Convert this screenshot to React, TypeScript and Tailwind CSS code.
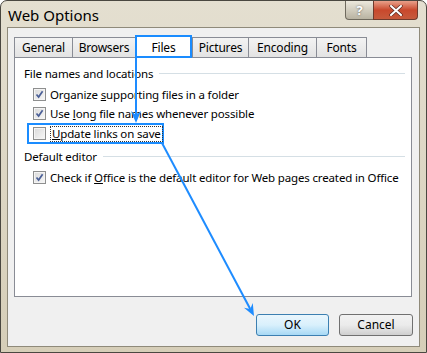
import React from "react";

const font = { fontFamily: '"Noto Sans", "Open Sans", sans-serif' };

type TabProps = { label: string; width: string; selected?: boolean };

function Tab({ label, width, selected }: TabProps) {
  if (selected) {
    return (
      <div
        className={`${width} relative z-10 -mb-px flex h-[23px] items-start justify-center border-2 border-[#1a8cff] bg-white pt-[2px] text-[12px] tracking-[-0.2px] text-black`}
      >
        {label}
      </div>
    );
  }
  return (
    <div
      className={`${width} mt-[2px] flex h-[20px] items-center justify-center border border-r-0 border-b-0 border-[#898c95] bg-gradient-to-b from-[#f3f3f3] to-[#e3e3e3] text-[12px] tracking-[-0.2px] text-black last:border-r`}
    >
      {label}
    </div>
  );
}

function CheckBox({ checked }: { checked?: boolean }) {
  return (
    <div className="flex h-[13px] w-[13px] shrink-0 items-center justify-center border border-[#8e8f8f] bg-white">
      <div className="flex h-[11px] w-[11px] items-center justify-center border border-[#f4f4f4] bg-gradient-to-br from-[#dcdcdc] to-[#f5f5f5]">
        {checked && (
          <svg width="9" height="9" viewBox="0 0 9 9">
            <path d="M1.5 4.5 L3.6 7 L7.6 1.2" fill="none" stroke="#4a5f97" strokeWidth="1.7" />
          </svg>
        )}
      </div>
    </div>
  );
}

function Group({ title }: { title: string }) {
  return (
    <div className="flex h-[19px] items-center gap-[6px] pl-[9px] pr-[6px]">
      <span className="whitespace-nowrap text-[11.5px] tracking-[-0.15px] text-black">{title}</span>
      <div className="h-px flex-1 bg-[#d5dfe5]" />
    </div>
  );
}

function Row({ checked, children }: { checked?: boolean; children: React.ReactNode }) {
  return (
    <div className="flex h-[19px] items-center gap-[4px] pl-[18px]">
      <CheckBox checked={checked} />
      <span className="whitespace-nowrap text-[11.5px] tracking-[-0.15px] text-black">{children}</span>
    </div>
  );
}

function Arrow({ x1, y1, x2, y2 }: { x1: number; y1: number; x2: number; y2: number }) {
  const a = Math.atan2(y2 - y1, x2 - x1);
  const len = 12;
  const wid = 5;
  const bx = x2 - Math.cos(a) * len;
  const by = y2 - Math.sin(a) * len;
  const nx = x2 - Math.cos(a) * (len - 4);
  const ny = y2 - Math.sin(a) * (len - 4);
  const px = -Math.sin(a) * wid;
  const py = Math.cos(a) * wid;
  return (
    <>
      <line x1={x1} y1={y1} x2={nx} y2={ny} stroke="#1e8cff" strokeWidth="2" />
      <polygon
        points={`${x2},${y2} ${bx + px},${by + py} ${nx},${ny} ${bx - px},${by - py}`}
        fill="#1e8cff"
      />
    </>
  );
}

export default function App() {
  return (
    <div className="relative h-[353px] w-[427px] overflow-hidden bg-white" style={font}>
      <div className="flex h-full w-full flex-col rounded-t-[7px] border border-[#4a4740] bg-gradient-to-b from-[#e4dfd0] to-[#d6ceb8]">
        {/* title bar */}
        <div className="flex h-[26px] shrink-0 items-start">
          <span className="mt-[5px] pl-[7px] text-[15px] leading-[18px] text-black">Web Options</span>
          <div className="ml-auto mr-[8px] flex">
            <div className="flex h-[19px] w-[29px] items-center justify-center rounded-bl-[4px] border border-t-0 border-[#6f6a5e] bg-gradient-to-b from-[#ece8dc] to-[#b9b3a2] text-[13px] font-bold leading-none text-white [text-shadow:0_0_2px_#555]">
              ?
            </div>
            <div className="-ml-px flex h-[19px] w-[45px] items-center justify-center rounded-br-[4px] border border-t-0 border-[#6f3a2c] bg-gradient-to-b from-[#e8a08a] via-[#c8482c] to-[#c65a3c]">
              <svg width="14" height="11" viewBox="0 0 14 11">
                <path d="M2 1 L12 10 M12 1 L2 10" stroke="#5a2a20" strokeWidth="3.4" strokeLinecap="round" />
                <path d="M2 1 L12 10 M12 1 L2 10" stroke="#ffffff" strokeWidth="2" strokeLinecap="round" />
              </svg>
            </div>
          </div>
        </div>

        {/* client area */}
        <div className="mx-[6px] flex h-[320px] flex-col border border-[#8f8a7a] bg-[#f0f0f0]">
          <div className="flex pl-[6px] pt-[7px]">
            <Tab label="General" width="w-[58px]" />
            <Tab label="Browsers" width="w-[63px]" />
            <Tab label="Files" width="w-[57px]" selected />
            <Tab label="Pictures" width="w-[56px]" />
            <Tab label="Encoding" width="w-[68px]" />
            <Tab label="Fonts" width="w-[51px]" />
          </div>

          <div className="ml-[6px] flex h-[240px] w-[398px] flex-col border border-[#898c95] bg-white pt-[6px]">
            <Group title="File names and locations" />
            <div className="mt-[2px]" />
            <Row checked>
              Organize <span className="underline">s</span>upporting files in a folder
            </Row>
            <Row checked>
              Use <span className="underline">l</span>ong file names whenever possible
            </Row>
            <div className="ml-[12px] flex h-[21px] w-[137px] items-center gap-[4px] border-2 border-[#1a8cff] pl-[4px]">
              <CheckBox />
              <span className="whitespace-nowrap border border-dotted border-[#333] px-px text-[11.5px] leading-[14px] tracking-[-0.15px] text-black">
                <span className="underline">U</span>pdate links on save
              </span>
            </div>
            <div className="mt-[3px]" />
            <Group title="Default editor" />
            <div className="mt-[2px]" />
            <Row checked>
              Check if <span className="underline">O</span>ffice is the default editor for Web pages created in Office
            </Row>
          </div>

          <div className="mt-auto mb-[10px] flex justify-end gap-[10px] pr-[6px]">
            <div className="flex h-[22px] w-[73px] items-center justify-center rounded-[3px] border border-[#3c7fb1] bg-gradient-to-b from-[#eaf6fd] via-[#d9f0fc] to-[#a7d9f5] text-[12px] text-black">
              OK
            </div>
            <div className="flex h-[22px] w-[74px] items-center justify-center rounded-[3px] border border-[#707070] bg-gradient-to-b from-[#f2f2f2] via-[#ebebeb] to-[#cfcfcf] text-[12px] text-black">
              Cancel
            </div>
          </div>
        </div>
      </div>

      <svg className="pointer-events-none absolute left-0 top-0" width="427" height="353">
        <Arrow x1={136} y1={58} x2={136} y2={123} />
        <Arrow x1={162} y1={143} x2={254} y2={316} />
      </svg>
    </div>
  );
}
